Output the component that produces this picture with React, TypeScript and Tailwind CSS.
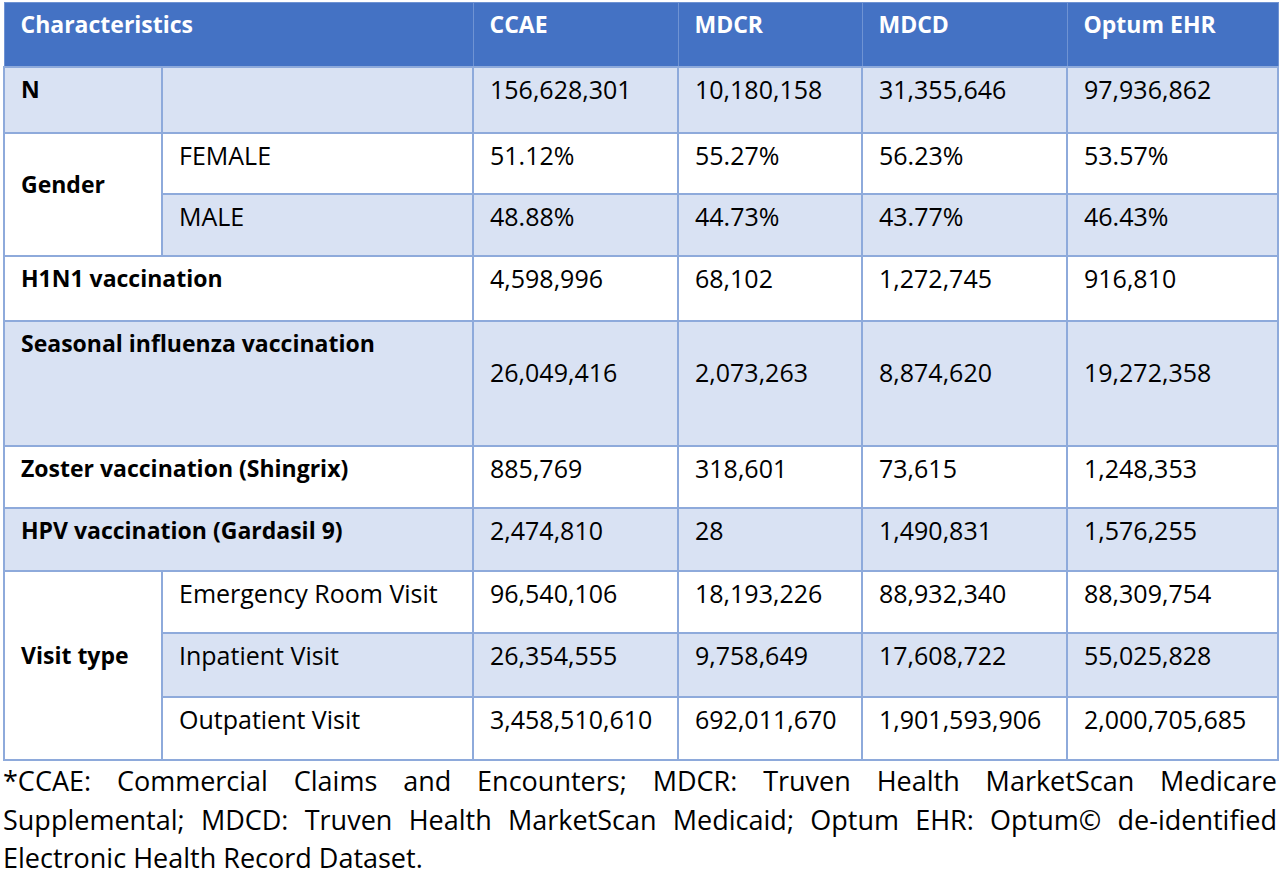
import React from 'react';

const font = { fontFamily: '"Open Sans", "Liberation Sans", sans-serif' };

type Row = {
  label?: string;
  labelSpan?: number;
  group?: string;
  groupRows?: number;
  sub?: string;
  values: string[];
  shaded: boolean;
  h: string;
  tall?: boolean;
};

const rows: Row[] = [
  { label: 'N', values: ['156,628,301', '10,180,158', '31,355,646', '97,936,862'], shaded: true, h: 'h-[66px]' },
  { group: 'Gender', groupRows: 2, sub: 'FEMALE', values: ['51.12%', '55.27%', '56.23%', '53.57%'], shaded: false, h: 'h-[61px]' },
  { sub: 'MALE', values: ['48.88%', '44.73%', '43.77%', '46.43%'], shaded: true, h: 'h-[62px]' },
  { label: 'H1N1 vaccination', labelSpan: 2, values: ['4,598,996', '68,102', '1,272,745', '916,810'], shaded: false, h: 'h-[65px]' },
  { label: 'Seasonal influenza vaccination', labelSpan: 2, values: ['26,049,416', '2,073,263', '8,874,620', '19,272,358'], shaded: true, h: 'h-[125px]', tall: true },
  { label: 'Zoster vaccination (Shingrix)', labelSpan: 2, values: ['885,769', '318,601', '73,615', '1,248,353'], shaded: false, h: 'h-[62px]' },
  { label: 'HPV vaccination (Gardasil 9)', labelSpan: 2, values: ['2,474,810', '28', '1,490,831', '1,576,255'], shaded: true, h: 'h-[63px]' },
  { group: 'Visit type', groupRows: 3, sub: 'Emergency Room Visit', values: ['96,540,106', '18,193,226', '88,932,340', '88,309,754'], shaded: false, h: 'h-[62px]' },
  { sub: 'Inpatient Visit', values: ['26,354,555', '9,758,649', '17,608,722', '55,025,828'], shaded: true, h: 'h-[64px]' },
  { sub: 'Outpatient Visit', values: ['3,458,510,610', '692,011,670', '1,901,593,906', '2,000,705,685'], shaded: false, h: 'h-[63px]' },
];

// border + padding shared by every body cell
const cell = 'border-2 border-[#8eaadb] px-4 leading-8';
const head = 'border border-[#6f93d3] px-4 pt-[5px] text-left align-top leading-8';

export default function App() {
  return (
    <div className="bg-white w-[1280px] h-[874px] overflow-hidden pt-[2px] text-[25px] text-black" style={font}>
      <table className="ml-[3px] w-[1274px] table-fixed border-collapse">
        <colgroup>
          <col className="w-[158px]" />
          <col className="w-[311px]" />
          <col className="w-[205px]" />
          <col className="w-[184px]" />
          <col className="w-[205px]" />
          <col className="w-[211px]" />
        </colgroup>
        <thead>
          <tr className="h-[64px] bg-[#4472c4] text-white font-bold text-[23px]">
            <th colSpan={2} className={head}>Characteristics</th>
            <th className={head}>CCAE</th>
            <th className={head}>MDCR</th>
            <th className={head}>MDCD</th>
            <th className={head}>Optum EHR</th>
          </tr>
        </thead>
        <tbody>
          {rows.map((r, i) => {
            const bg = r.shaded ? 'bg-[#d9e2f3]' : 'bg-white';
            return (
              <tr key={i} className={r.h}>
                {r.group && (
                  <td rowSpan={r.groupRows} className={`${cell} bg-white font-bold text-[23px] align-middle pb-5`}>{r.group}</td>
                )}
                {r.label && (
                  <td colSpan={r.labelSpan} className={`${cell} ${bg} align-top font-bold text-[23px] pt-[5px]`}>{r.label}</td>
                )}
                {r.label && !r.labelSpan && <td className={`${cell} ${bg} align-top`}></td>}
                {r.sub && <td className={`${cell} ${bg} align-top pt-[5px]`}>{r.sub}</td>}
                {r.values.map((v, j) => (
                  <td key={j} className={`${cell} ${bg} align-top ${r.tall ? 'pt-[34px]' : 'pt-[5px]'}`}>{v}</td>
                ))}
              </tr>
            );
          })}
        </tbody>
      </table>
      <div className="ml-[3px] w-[1274px] text-[27px] leading-[39px]">
        <p className="text-justify [text-align-last:justify]">
          *CCAE: Commercial Claims and Encounters; MDCR: Truven Health MarketScan Medicare
        </p>
        <p className="text-justify [text-align-last:justify]">
          Supplemental; MDCD: Truven Health MarketScan Medicaid; Optum EHR: Optum© de-identified
        </p>
        <p className="pt-[4px] leading-[30px]">Electronic Health Record Dataset.</p>
      </div>
    </div>
  );
}
